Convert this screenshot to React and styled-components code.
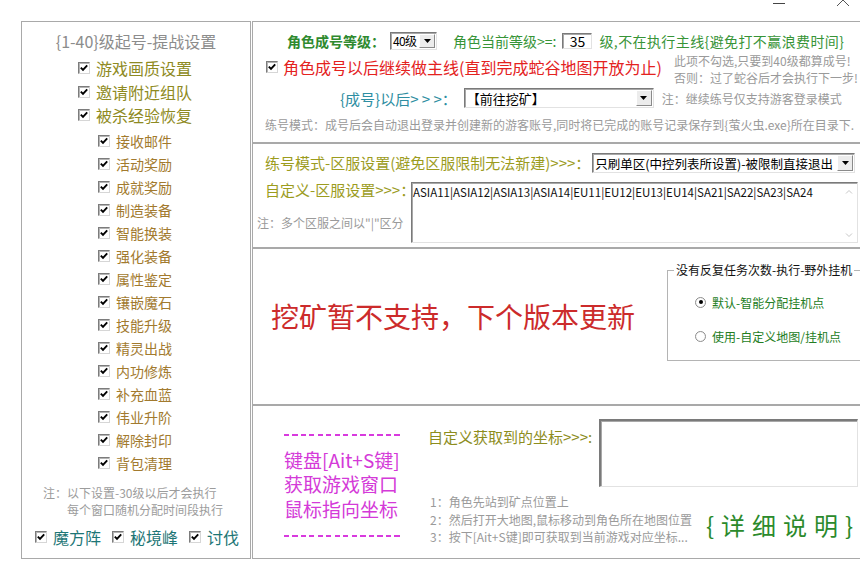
import React from "react";
import styled, { createGlobalStyle } from "styled-components";

const GlobalStyle = createGlobalStyle`
  html, body {
    margin: 0;
    padding: 0;
    background: #fff;
  }
  body {
    font-family: "Noto Sans CJK SC", "Noto Sans", sans-serif;
  }
`;

const Frame = styled.div`
  width: 860px;
  height: 565px;
  overflow: hidden;
  background: #fff;
  font-family: "Noto Sans CJK SC", "Noto Sans", sans-serif;
`;

const TitleBar = styled.div`
  height: 21px;
  display: flex;
  justify-content: flex-end;
  align-items: flex-start;
  gap: 52px;
  padding-right: 11px;
  box-sizing: border-box;
`;

const Body = styled.div`
  display: flex;
  align-items: flex-start;
  gap: 1px;
  padding-left: 21px;
`;

/* ---------- shared controls ---------- */

const Box = styled.span`
  box-sizing: border-box;
  width: 12px;
  height: 12px;
  flex: none;
  display: flex;
  align-items: center;
  justify-content: center;
  background: #fff;
  border: 1px solid;
  border-color: #7c7c7c #d6d6d6 #d6d6d6 #7c7c7c;
  box-shadow: inset 1px 1px 0 #b4b4b4;
`;

const Checkbox = () => (
  <Box>
    <svg width="8" height="8" viewBox="0 0 8 8">
      <path d="M0.8 3.6 L3 5.9 L7.2 1.4" fill="none" stroke="#000" strokeWidth="1.9" />
    </svg>
  </Box>
);

const Sunken = styled.div`
  box-sizing: border-box;
  background: #fff;
  border: 1px solid;
  border-color: #7a7a7a #e2e2e2 #e2e2e2 #7a7a7a;
  box-shadow: inset 1px 1px 0 #a8a8a8;
`;

const SelectBox = styled(Sunken)`
  display: flex;
  align-items: stretch;
  width: ${p => p.$w}px;
  height: ${p => p.$h}px;
  margin-left: ${p => p.$ml || 0}px;
  flex: none;
`;

const SelectValue = styled.span`
  flex: 1;
  display: flex;
  align-items: center;
  padding-left: 2px;
  font-size: ${p => p.$fs}px;
  letter-spacing: ${p => p.$ls || 0}px;
  color: #000;
  white-space: nowrap;
  overflow: hidden;
`;

const DropButton = styled.span`
  box-sizing: border-box;
  width: 16px;
  margin: 1px;
  flex: none;
  display: flex;
  align-items: center;
  justify-content: center;
  background: #ececec;
  border: 1px solid;
  border-color: #fff #8a8a8a #8a8a8a #fff;
`;

const Select = ({ w, h, ml, fs, ls, children }) => (
  <SelectBox $w={w} $h={h} $ml={ml}>
    <SelectValue $fs={fs} $ls={ls}>{children}</SelectValue>
    <DropButton>
      <svg width="7" height="4" viewBox="0 0 7 4">
        <path d="M0 0 H7 L3.5 4 Z" fill="#000" />
      </svg>
    </DropButton>
  </SelectBox>
);

const NumberBox = styled(Sunken)`
  width: 30px;
  height: 16px;
  margin-left: 6px;
  display: flex;
  align-items: center;
  justify-content: center;
  font-size: 14px;
  color: #000;
`;

/* ---------- left panel ---------- */

const SidePanel = styled.div`
  box-sizing: border-box;
  width: 230px;
  height: 538px;
  flex: none;
  border: 1px solid #a9a9a9;
  display: flex;
  flex-direction: column;
`;

const PanelTitle = styled.div`
  margin-top: 9px;
  margin-bottom: 5.25px;
  height: 20px;
  line-height: 20px;
  text-align: center;
  font-size: 16px;
  color: #8c8c8c;
`;

const CheckRow = styled.div`
  display: flex;
  align-items: center;
  gap: 6px;
  height: ${p => p.$h}px;
  padding-left: ${p => p.$indent}px;
  font-size: ${p => p.$size}px;
  color: ${p => p.$color};
  white-space: nowrap;
`;

const SubList = styled.div`
  margin-top: 2.5px;
`;

const SideNote = styled.div`
  margin-top: 9.25px;
  padding-left: 21px;
  font-size: 12px;
  line-height: 17px;
  color: #9c9c9c;
  white-space: nowrap;
`;

const SideNoteIndent = styled.div`
  padding-left: 24px;
`;

const ExtraRow = styled.div`
  margin-top: 9.5px;
  height: 20px;
  display: flex;
  align-items: center;
  gap: 11px;
  padding-left: 13px;
`;

const ExtraItem = styled.div`
  display: flex;
  align-items: center;
  gap: 6px;
  font-size: 16px;
  color: #1d7676;
  white-space: nowrap;
`;

/* ---------- right sections ---------- */

const RightColumn = styled.div`
  width: 640px;
  flex: none;
  display: flex;
  flex-direction: column;
`;

const Section = styled.section`
  box-sizing: border-box;
  height: ${p => p.$h}px;
  border: 1px solid #a9a9a9;
  white-space: nowrap;
`;

const LevelSection = styled(Section)`
  display: flex;
  flex-direction: column;
  align-items: flex-start;
  padding: 9px 0 0 12px;
`;

const LevelRow = styled.div`
  display: flex;
  align-items: center;
  height: 19px;
  margin-left: 22px;
`;

const BoldLabel = styled.span`
  font-size: 14px;
  font-weight: bold;
  color: #2f8a2f;
`;

const GreenText = styled.span`
  font-size: 14px;
  color: #379437;
  margin-left: ${p => p.$ml || 0}px;
  letter-spacing: ${p => p.$ls || 0}px;
`;

const MainlineRow = styled.div`
  display: flex;
  align-items: flex-start;
  margin-top: 1.5px;
  margin-left: 1px;
`;

const MainlineCheck = styled.div`
  display: flex;
  align-items: center;
  gap: 5px;
  height: 20px;
  margin-top: 5.5px;
  width: 400px;
`;

const RedLabel = styled.span`
  font-size: 16px;
  color: #e4221e;
`;

const NoteStack = styled.div`
  margin-left: 8px;
  font-size: 12px;
  line-height: 17px;
  color: #9a9a9a;
`;

const AfterRow = styled.div`
  display: flex;
  align-items: center;
  height: 20px;
  margin-top: 2.5px;
  margin-left: 75px;
`;

const TealLabel = styled.span`
  font-size: 15px;
  color: #2e8ea2;
`;

const GrayNote = styled.span`
  font-size: 12px;
  color: #9a9a9a;
  margin-left: ${p => p.$ml || 0}px;
`;

const ModeLine = styled.div`
  margin-top: 9px;
  font-size: 12px;
  line-height: 16px;
  color: #9a9a9a;
`;

const ServerSection = styled(Section)`
  display: flex;
  flex-direction: column;
  padding: 9px 0 0 12px;
`;

const ServerRow = styled.div`
  display: flex;
  align-items: center;
  height: 20px;
`;

const OliveLabel = styled.span`
  font-size: 15px;
  line-height: 16px;
  color: #9c9c1e;
`;

const ServerCustomRow = styled.div`
  display: flex;
  align-items: flex-start;
  margin-top: 9px;
`;

const ServerLabels = styled.div`
  width: 146px;
  flex: none;
  display: flex;
  flex-direction: column;
`;

const ServerNote = styled.div`
  margin-top: 17px;
  margin-left: -8px;
  font-size: 12px;
  line-height: 16px;
  color: #9a9a9a;
`;

const ServerArea = styled(Sunken)`
  width: 447px;
  height: 61px;
  display: flex;
`;

const AreaText = styled.div`
  flex: 1;
  padding: 1px 0 0 1px;
  font-size: 11.5px;
  line-height: 16px;
  color: #111;
`;

const ScrollTrack = styled.div`
  width: 16px;
  display: flex;
  flex-direction: column;
  justify-content: space-between;
  align-items: center;
  padding: 6px 0 4px;
`;

const MiningSection = styled(Section)`
  display: flex;
  align-items: flex-start;
  padding-left: 18px;
`;

const BigRed = styled.div`
  margin-top: 49px;
  font-size: 28px;
  line-height: 36px;
  color: #cc2b2b;
`;

const GroupBox = styled.fieldset`
  box-sizing: border-box;
  margin: 14px 0 0 32px;
  width: 260px;
  height: 98px;
  padding: 0 0 0 6px;
  border: 1px solid #b4b4b4;
  min-width: 0;
`;

const GroupLegend = styled.legend`
  padding: 0 2px;
  font-size: 12px;
  line-height: 14px;
  color: #111;
`;

const RadioList = styled.div`
  display: flex;
  flex-direction: column;
  gap: 16px;
  padding: 16px 0 0 21px;
`;

const RadioRow = styled.div`
  display: flex;
  align-items: center;
  gap: 6px;
  height: 18px;
  font-size: 12px;
  color: #237d23;
`;

const RadioDot = styled.span`
  box-sizing: border-box;
  width: 11px;
  height: 11px;
  border-radius: 50%;
  border: 1px solid #8e8e8e;
  background: radial-gradient(circle, #fff 55%, #e6e6e6);
  display: flex;
  align-items: center;
  justify-content: center;

  &::after {
    content: "";
    width: 4px;
    height: 4px;
    border-radius: 50%;
    background: ${p => (p.$on ? "#000" : "transparent")};
  }
`;

const CoordSection = styled(Section)`
  display: flex;
  align-items: flex-start;
  padding: 13px 0 0 31px;
`;

const HotkeyColumn = styled.div`
  width: 118px;
  flex: none;
  margin-top: 15px;
`;

const Dash = styled.div`
  height: 2px;
  margin-top: ${p => p.$mt || 0}px;
  background: repeating-linear-gradient(90deg, #d83ade 0 5px, transparent 5px 8.5px);
`;

const HotkeyText = styled.div`
  margin-top: 11.5px;
  font-size: 19px;
  line-height: 24.5px;
  color: #d43ad8;
`;

const CoordArea = styled.div`
  margin-left: 26px;
  display: flex;
  flex-direction: column;
`;

const CoordTop = styled.div`
  display: grid;
  grid-template-columns: 171px 259px;
  align-items: start;
`;

const CoordLabel = styled.span`
  margin-top: 10px;
  font-size: 15px;
  line-height: 16px;
  color: #8d8d1d;
`;

const CoordBox = styled(Sunken)`
  height: 68px;
  border-width: 2px 1px 1px 2px;
`;

const CoordBottom = styled.div`
  display: flex;
  align-items: flex-start;
  margin-top: 6px;
`;

const Steps = styled.div`
  width: 276px;
  padding-left: 2px;
  font-size: 12px;
  line-height: 17.5px;
  color: #9a9a9a;
`;

const DetailLink = styled.div`
  margin-top: 17px;
  font-size: 24px;
  line-height: 30px;
  letter-spacing: 7px;
  color: #2b8a2b;
`;

const mainItems = ["游戏画质设置", "邀请附近组队", "被杀经验恢复"];
const subItems = [
  "接收邮件", "活动奖励", "成就奖励", "制造装备", "智能换装",
  "强化装备", "属性鉴定", "镶嵌魔石", "技能升级", "精灵出战",
  "内功修炼", "补充血蓝", "伟业升阶", "解除封印", "背包清理",
];
const extraItems = ["魔方阵", "秘境峰", "讨伐"];

const Chevron = ({ up }) => (
  <svg width="8" height="5" viewBox="0 0 8 5">
    <path d={up ? "M1 4.5 L4 1.5 L7 4.5" : "M1 0.5 L4 3.5 L7 0.5"} fill="none" stroke="#c6c6c6" strokeWidth="1" />
  </svg>
);

export default function App() {
  return (
    <Frame>
      <GlobalStyle />
      <TitleBar>
        <svg width="12" height="6" viewBox="0 0 12 6">
          <path d="M0 3.5 H12" stroke="#444" strokeWidth="1" />
        </svg>
        <svg width="12" height="6" viewBox="0 0 12 6">
          <path d="M0 6 L6 0 L12 6" fill="none" stroke="#555" strokeWidth="1" />
        </svg>
      </TitleBar>
      <Body>
        <SidePanel>
          <PanelTitle>{"{1-40}级起号-提战设置"}</PanelTitle>
          {mainItems.map(t => (
            <CheckRow key={t} $h={23.5} $indent={56} $size={16} $color="#8e8a22">
              <Checkbox />
              {t}
            </CheckRow>
          ))}
          <SubList>
            {subItems.map(t => (
              <CheckRow key={t} $h={23} $indent={76} $size={14} $color="#a27a2e">
                <Checkbox />
                {t}
              </CheckRow>
            ))}
          </SubList>
          <SideNote>
            注：以下设置-30级以后才会执行
            <SideNoteIndent>每个窗口随机分配时间段执行</SideNoteIndent>
          </SideNote>
          <ExtraRow>
            {extraItems.map(t => (
              <ExtraItem key={t}>
                <Checkbox />
                {t}
              </ExtraItem>
            ))}
          </ExtraRow>
        </SidePanel>

        <RightColumn>
          <LevelSection $h={122}>
            <LevelRow>
              <BoldLabel>角色成号等级：</BoldLabel>
              <Select w={47} h={18} ml={5} fs={12} ls={-0.6}>40级</Select>
              <GreenText $ml={16}>角色当前等级&gt;=:</GreenText>
              <NumberBox>35</NumberBox>
              <GreenText $ml={7} $ls={0.4}>级,不在执行主线{"{避免打不赢浪费时间}"}</GreenText>
            </LevelRow>
            <MainlineRow>
              <MainlineCheck>
                <Checkbox />
                <RedLabel>角色成号以后继续做主线(直到完成蛇谷地图开放为止)</RedLabel>
              </MainlineCheck>
              <NoteStack>
                <div>此项不勾选,只要到40级都算成号!</div>
                <div>否则：过了蛇谷后才会执行下一步!</div>
              </NoteStack>
            </MainlineRow>
            <AfterRow>
              <TealLabel>{"{成号}以后> > >："}</TealLabel>
              <Select w={190} h={20} ml={7} fs={13}>【前往挖矿】</Select>
              <GrayNote $ml={8}>注：继续练号仅支持游客登录模式</GrayNote>
            </AfterRow>
            <ModeLine>
              练号模式：成号后会自动退出登录并创建新的游客账号,同时将已完成的账号记录保存到{"{萤火虫.exe}"}所在目录下.
            </ModeLine>
          </LevelSection>

          <ServerSection $h={105}>
            <ServerRow>
              <OliveLabel>练号模式-区服设置(避免区服限制无法新建)&gt;&gt;&gt;：</OliveLabel>
              <Select w={263} h={20} ml={2} fs={12.5}>只刷单区(中控列表所设置)-被限制直接退出</Select>
            </ServerRow>
            <ServerCustomRow>
              <ServerLabels>
                <OliveLabel>自定义-区服设置&gt;&gt;&gt;：</OliveLabel>
                <ServerNote>注：多个区服之间以"|"区分</ServerNote>
              </ServerLabels>
              <ServerArea>
                <AreaText>ASIA11|ASIA12|ASIA13|ASIA14|EU11|EU12|EU13|EU14|SA21|SA22|SA23|SA24</AreaText>
                <ScrollTrack>
                  <Chevron up />
                  <Chevron />
                </ScrollTrack>
              </ServerArea>
            </ServerCustomRow>
          </ServerSection>

          <MiningSection $h={157}>
            <BigRed>挖矿暂不支持，下个版本更新</BigRed>
            <GroupBox>
              <GroupLegend>没有反复任务次数-执行-野外挂机</GroupLegend>
              <RadioList>
                <RadioRow>
                  <RadioDot $on />
                  默认-智能分配挂机点
                </RadioRow>
                <RadioRow>
                  <RadioDot />
                  使用-自定义地图/挂机点
                </RadioRow>
              </RadioList>
            </GroupBox>
          </MiningSection>

          <CoordSection $h={154}>
            <HotkeyColumn>
              <Dash />
              <HotkeyText>
                <div>键盘[Ait+S键]</div>
                <div>获取游戏窗口</div>
                <div>鼠标指向坐标</div>
              </HotkeyText>
              <Dash $mt={14} />
            </HotkeyColumn>
            <CoordArea>
              <CoordTop>
                <CoordLabel>自定义获取到的坐标&gt;&gt;&gt;:</CoordLabel>
                <CoordBox />
              </CoordTop>
              <CoordBottom>
                <Steps>
                  <div>1：角色先站到矿点位置上</div>
                  <div>2：然后打开大地图,鼠标移动到角色所在地图位置</div>
                  <div>3：按下[Ait+S键]即可获取到当前游戏对应坐标...</div>
                </Steps>
                <DetailLink>{"{详细说明}"}</DetailLink>
              </CoordBottom>
            </CoordArea>
          </CoordSection>
        </RightColumn>
      </Body>
    </Frame>
  );
}
